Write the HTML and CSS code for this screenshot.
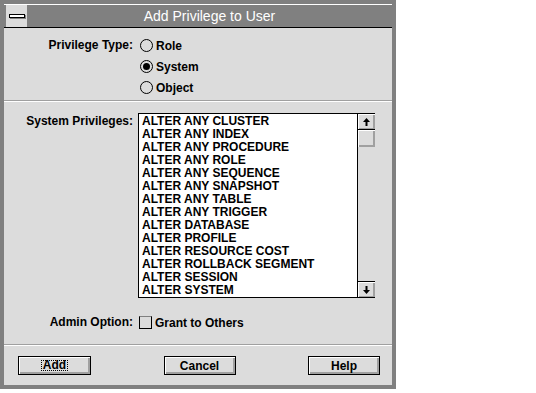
FILE: index.html
```html
<!DOCTYPE html>
<html>
<head>
  <title>Add Privilege to User</title>
  <link rel="stylesheet" href="styles.css">
</head>
<body>
  <div class="window">
    <div class="titlebar">
      <div class="sysmenu"><span class="sysbar"></span></div>
      <div class="title">Add Privilege to User</div>
    </div>

    <div class="dialog">
      <div class="section type-section">
        <div class="label">Privilege Type:</div>
        <div class="radios">
          <div class="radio"><span class="circle"></span>Role</div>
          <div class="radio"><span class="circle on"></span>System</div>
          <div class="radio"><span class="circle"></span>Object</div>
        </div>
      </div>

      <div class="section priv-section">
        <div class="label top">System Privileges:</div>
        <div class="listbox">
          <ul id="items" class="items"></ul>
          <div class="scrollbar">
            <div class="sb-btn">
              <svg width="9" height="10" viewBox="0 0 9 10"><polygon points="4.5,1 8,5 1,5" fill="#000"/><rect x="3.5" y="5" width="2" height="4" fill="#000"/></svg>
            </div>
            <div class="sb-btn thumb"></div>
            <div class="track"></div>
            <div class="sb-btn">
              <svg width="9" height="10" viewBox="0 0 9 10"><polygon points="4.5,9 8,5 1,5" fill="#000"/><rect x="3.5" y="1" width="2" height="4" fill="#000"/></svg>
            </div>
          </div>
        </div>

        <div class="label">Admin Option:</div>
        <div class="check"><span class="box"></span>Grant to Others</div>
      </div>

      <div class="buttons">
        <div class="btn default"><span class="focus">Add</span></div>
        <div class="btn">Cancel</div>
        <div class="btn">Help</div>
      </div>
    </div>
  </div>

  <script>
    const privileges = [
      'ALTER ANY CLUSTER',
      'ALTER ANY INDEX',
      'ALTER ANY PROCEDURE',
      'ALTER ANY ROLE',
      'ALTER ANY SEQUENCE',
      'ALTER ANY SNAPSHOT',
      'ALTER ANY TABLE',
      'ALTER ANY TRIGGER',
      'ALTER DATABASE',
      'ALTER PROFILE',
      'ALTER RESOURCE COST',
      'ALTER ROLLBACK SEGMENT',
      'ALTER SESSION',
      'ALTER SYSTEM'
    ]

    const list = document.getElementById('items')
    privileges.forEach(p => {
        const li = document.createElement('li')
        li.textContent = p
        list.appendChild(li)
    })
  </script>
</body>
</html>
```

FILE: styles.css
```css
body {
  margin: 0;
  background: #fff;
  font-family: "Liberation Sans", Arial, sans-serif;
  font-size: 12px;
  font-weight: bold;
  color: #000;
}

.window {
  width: 396px;
  height: 389px;
  box-sizing: border-box;
  border: 4px solid #808080;
  background: #dcdcdc;
}

.titlebar {
  display: flex;
  height: 24px;
  box-sizing: border-box;
  border-top: 1px solid #fff;
  border-bottom: 1px solid #000;
  background: #808080;
}

.sysmenu {
  width: 21px;
  margin-left: 2px;
  background: #dcdcdc;
  display: flex;
  align-items: center;
  justify-content: center;
}

.sysbar {
  width: 14px;
  height: 2px;
  background: #fff;
  border: 1px solid #000;
  box-shadow: 1px 1px 0 #808080;
}

.title {
  flex: 1;
  text-align: center;
  color: #fff;
  font-size: 14px;
  font-weight: normal;
  line-height: 22px;
}

.dialog {
  height: 357px;
  display: flex;
  flex-direction: column;
}

.section {
  display: grid;
  grid-template-columns: 129px 1fr;
  column-gap: 5px;
}

.label {
  text-align: right;
  line-height: 13px;
  align-self: center;
}

.label.top {
  align-self: start;
  margin-top: 2px;
}

.type-section {
  height: 73px;
  box-sizing: border-box;
  padding-top: 7px;
  border-bottom: 1px solid #a0a0a0;
  grid-template-rows: 21px;
}

.type-section .label {
  line-height: 21px;
  align-self: start;
}

.radio {
  display: flex;
  align-items: center;
  height: 21px;
  margin-left: 2px;
}

.circle {
  width: 11px;
  height: 11px;
  border: 1px solid #000;
  border-radius: 50%;
  margin-right: 3px;
  position: relative;
}

.circle.on::after {
  content: "";
  position: absolute;
  left: 2px;
  top: 2px;
  width: 7px;
  height: 7px;
  border-radius: 50%;
  background: #000;
}

.priv-section {
  border-top: 1px solid #fff;
  border-bottom: 1px solid #a0a0a0;
  padding: 11px 0 15px;
  row-gap: 18px;
}

.listbox {
  width: 237px;
  height: 185px;
  box-sizing: border-box;
  border: 1px solid #000;
  border-right: 0;
  display: flex;
  background: #fff;
}

.items {
  flex: 1;
  list-style: none;
  margin: 0;
  padding: 1px 0 0 3px;
  line-height: 13px;
  overflow: hidden;
  white-space: nowrap;
}

.scrollbar {
  width: 17px;
  border-left: 1px solid #000;
  display: flex;
  flex-direction: column;
  background: #dcdcdc;
}

.sb-btn {
  height: 16px;
  box-sizing: border-box;
  border-bottom: 1px solid #000;
  background: #dcdcdc;
  box-shadow: inset 1px 1px 0 #fff, inset -2px -1px 0 #a0a0a0;
  display: flex;
  align-items: center;
  justify-content: center;
}

.thumb {
  height: 17px;
  border-bottom: 0;
  box-shadow: inset 1px 1px 0 #fff, inset -2px -2px 0 #a0a0a0;
}

.track {
  flex: 1;
}

.sb-btn:last-child {
  border-bottom: 0;
  border-top: 1px solid #000;
}

.check {
  display: flex;
  align-items: center;
  height: 13px;
  margin-left: 1px;
}

.box {
  width: 11px;
  height: 11px;
  border: 1px solid #000;
  border-top-color: #808080;
  margin-right: 3px;
}

.buttons {
  border-top: 1px solid #fff;
  padding: 10px 12px 0 14px;
  display: flex;
  justify-content: space-between;
}

.btn {
  width: 72px;
  height: 19px;
  box-sizing: border-box;
  border: 1px solid #000;
  background: #dcdcdc;
  box-shadow: inset 1px 1px 0 #fff, inset -2px -2px 0 #a0a0a0;
  display: flex;
  align-items: center;
  justify-content: center;
}

.btn.default {
  width: 73px;
}

.focus {
  border: 1px dotted #000;
  padding: 0 1px;
  line-height: 9px;
}
```
